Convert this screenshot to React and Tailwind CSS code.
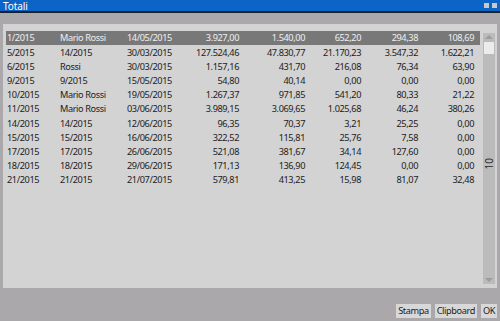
const rows = [
  ["1/2015", "Mario Rossi", "14/05/2015", "3.927,00", "1.540,00", "652,20", "294,38", "108,69"],
  ["5/2015", "14/2015", "30/03/2015", "127.524,46", "47.830,77", "21.170,23", "3.547,32", "1.622,21"],
  ["6/2015", "Rossi", "30/03/2015", "1.157,16", "431,70", "216,08", "76,34", "63,90"],
  ["9/2015", "9/2015", "15/05/2015", "54,80", "40,14", "0,00", "0,00", "0,00"],
  ["10/2015", "Mario Rossi", "19/05/2015", "1.267,37", "971,85", "541,20", "80,33", "21,22"],
  ["11/2015", "Mario Rossi", "03/06/2015", "3.989,15", "3.069,65", "1.025,68", "46,24", "380,26"],
  ["14/2015", "14/2015", "12/06/2015", "96,35", "70,37", "3,21", "25,25", "0,00"],
  ["15/2015", "15/2015", "16/06/2015", "322,52", "115,81", "25,76", "7,58", "0,00"],
  ["17/2015", "17/2015", "26/06/2015", "521,08", "381,67", "34,14", "127,60", "0,00"],
  ["18/2015", "18/2015", "29/06/2015", "171,13", "136,90", "124,45", "0,00", "0,00"],
  ["21/2015", "21/2015", "21/07/2015", "579,81", "413,25", "15,98", "81,07", "32,48"],
];

function Row({ cells, selected }) {
  return (
    <div
      className={`grid h-[14.2px] grid-cols-[53px_67px_54px_59px_66px_56px_57px_56px_6px] items-center ${
        selected ? "bg-[#787878] text-[#efefef]" : "text-[#1c1c1c]"
      }`}
    >
      {cells.map((c, i) => (
        <span
          key={i}
          className={`whitespace-nowrap ${i < 3 ? "pl-[1px] text-left" : "text-right"}`}
        >
          {c}
        </span>
      ))}
      <span />
    </div>
  );
}

export default function App() {
  return (
    <div className="flex h-[321px] w-[500px] flex-col bg-[#aaa8aa] font-['Noto_Sans',sans-serif] text-[9.2px] leading-none tracking-[-0.4px]">
      {/* title bar */}
      <div className="flex h-[13px] items-center justify-between border-b-2 border-[#17202c] bg-[#0b64c6] pl-[3px] pr-[3px]">
        <span className="pt-[1px] text-[10px] leading-[10px] tracking-[-0.1px] text-white">Totali</span>
        <div className="flex gap-[3px]">
          <span className="h-[5px] w-[5px] bg-[#c9c9c9]" />
          <span className="h-[5px] w-[5px] bg-[#c9c9c9]" />
        </div>
      </div>

      {/* table panel */}
      <div className="flex flex-1 flex-col px-[3px] pt-[11px]">
        <div className="relative flex h-[264px] bg-[#d3d3d3] pl-[3px] pt-[7px]">
          <div className="w-[474px]">
            {rows.map((r, i) => (
              <Row key={i} cells={r} selected={i === 0} />
            ))}
          </div>

          {/* scrollbar */}
          <div className="ml-[3px] mt-[2px] flex h-[251px] w-[12px] flex-col items-center bg-[#bcbbbc]">
            <span className="mt-[2px] h-0 w-0 border-x-[4px] border-b-[4px] border-x-transparent border-b-[#9c9c9c]" />
            <span className="mt-[3px] h-[12px] w-[10px] bg-[#ececec]" />
            <span className="mt-[104px] rotate-180 text-[10px] tracking-normal text-[#2a2a2a] [writing-mode:vertical-rl]">
              10
            </span>
            <span className="mt-auto mb-[2px] h-0 w-0 border-x-[4px] border-t-[4px] border-x-transparent border-t-[#9c9c9c]" />
          </div>
        </div>

        {/* buttons */}
        <div className="mt-[16px] flex justify-end gap-[4px] text-[#1c1c1c]">
          <button className="h-[14px] bg-[#d8d8d8] px-[2px]">Stampa</button>
          <button className="h-[14px] bg-[#d8d8d8] px-[2px]">Clipboard</button>
          <button className="h-[14px] bg-[#d8d8d8] px-[2px]">OK</button>
        </div>
      </div>
    </div>
  );
}
